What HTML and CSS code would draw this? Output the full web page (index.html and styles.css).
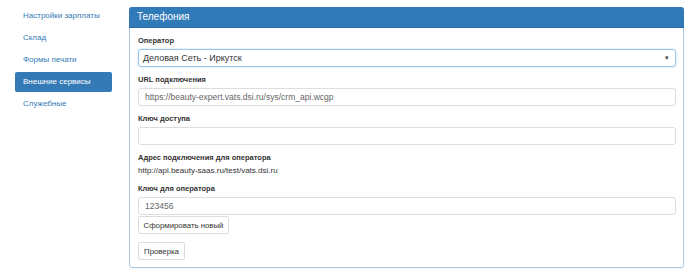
FILE: index.html
```html
<!DOCTYPE html>
<html lang="ru">
<head>
    <meta charset="UTF-8">
    <title>Телефония</title>
    <link rel="stylesheet" href="styles.css">
</head>
<body>
    <div class="layout">
        <ul class="side-menu">
            <li class="menu-item">Настройки зарплаты</li>
            <li class="menu-item">Склад</li>
            <li class="menu-item">Формы печати</li>
            <li class="menu-item active">Внешние сервисы</li>
            <li class="menu-item">Служебные</li>
        </ul>

        <div class="panel">
            <div class="panel-heading">Телефония</div>
            <div class="panel-body">
                <div class="group">
                    <label class="label">Оператор</label>
                    <div class="control select">
                        <span>Деловая Сеть - Иркутск</span>
                        <span class="caret">&#9662;</span>
                    </div>
                </div>
                <div class="group">
                    <label class="label">URL подключения</label>
                    <div class="control muted">https://beauty-expert.vats.dsi.ru/sys/crm_api.wcgp</div>
                </div>
                <div class="group">
                    <label class="label">Ключ доступа</label>
                    <div class="control"></div>
                </div>
                <div class="group">
                    <label class="label">Адрес подключения для оператора</label>
                    <div class="static">http://api.beauty-saas.ru/test/vats.dsi.ru</div>
                </div>
                <div class="group">
                    <label class="label">Ключ для оператора</label>
                    <div class="control muted">123456</div>
                    <button class="btn btn-new">Сформировать новый</button>
                </div>
                <button class="btn btn-check">Проверка</button>
            </div>
        </div>
    </div>
</body>
</html>
```

FILE: styles.css
```css
body{
    margin: 0;
    background: #fff;
    font-family: "Liberation Sans", Arial, sans-serif;
    color: #333;
}

.layout{
    display: flex;
    width: 700px;
    height: 280px;
}

.side-menu{
    list-style: none;
    margin: 0;
    padding: 6px 0 0 15px;
    width: 97px;
    margin-right: 17px;
}

.menu-item{
    height: 20px;
    line-height: 20px;
    margin-bottom: 2px;
    padding-left: 8px;
    font-size: 8px;
    color: #337ab7;
    border-radius: 2px;
}

.menu-item.active{
    background: #337ab7;
    color: #fff;
}

.panel{
    margin-top: 7px;
    width: 553px;
    height: 259px;
    border: 1px solid #aac9e6;
    border-radius: 3px;
    box-shadow: 0 1px 1px rgba(0,0,0,.05);
}

.panel-heading{
    height: 20px;
    line-height: 19px;
    background: #317ab8;
    border-bottom: 1px solid #2a6aa3;
    color: #fff;
    font-size: 10px;
    padding-left: 8px;
    margin: -1px -1px 0 -1px;
    border-radius: 3px 3px 0 0;
}

.panel-body{
    padding: 8px 7px 0 8px;
}

.group{
    margin-bottom: 8px;
}

.label{
    display: block;
    font-size: 7.5px;
    font-weight: bold;
    height: 10px;
    line-height: 10px;
    margin-bottom: 3px;
    color: #333;
}

.control{
    box-sizing: border-box;
    height: 18px;
    line-height: 16px;
    border: 1px solid #ddd;
    border-radius: 3px;
    padding: 0 6px;
    font-size: 8.5px;
    color: #333;
}

.control.muted{
    color: #666;
}

.select{
    display: flex;
    justify-content: space-between;
    border-color: #9cc6ee;
    box-shadow: 0 0 2px rgba(102,175,233,.5);
    padding-left: 4px;
    font-size: 9px;
}

.caret{
    font-size: 7px;
    color: #444;
}

.static{
    font-size: 8px;
    height: 10px;
    line-height: 10px;
    margin-top: 2px;
    color: #333;
}

.btn{
    display: block;
    box-sizing: border-box;
    height: 18px;
    border: 1px solid #ddd;
    border-radius: 2px;
    background: #fff;
    font-family: inherit;
    font-size: 7.8px;
    color: #333;
    padding: 0;
    white-space: nowrap;
    text-align: center;
}

.btn-new{
    margin-top: 1px;
    width: 91px;
}

.btn-check{
    width: 47px;
}
```
